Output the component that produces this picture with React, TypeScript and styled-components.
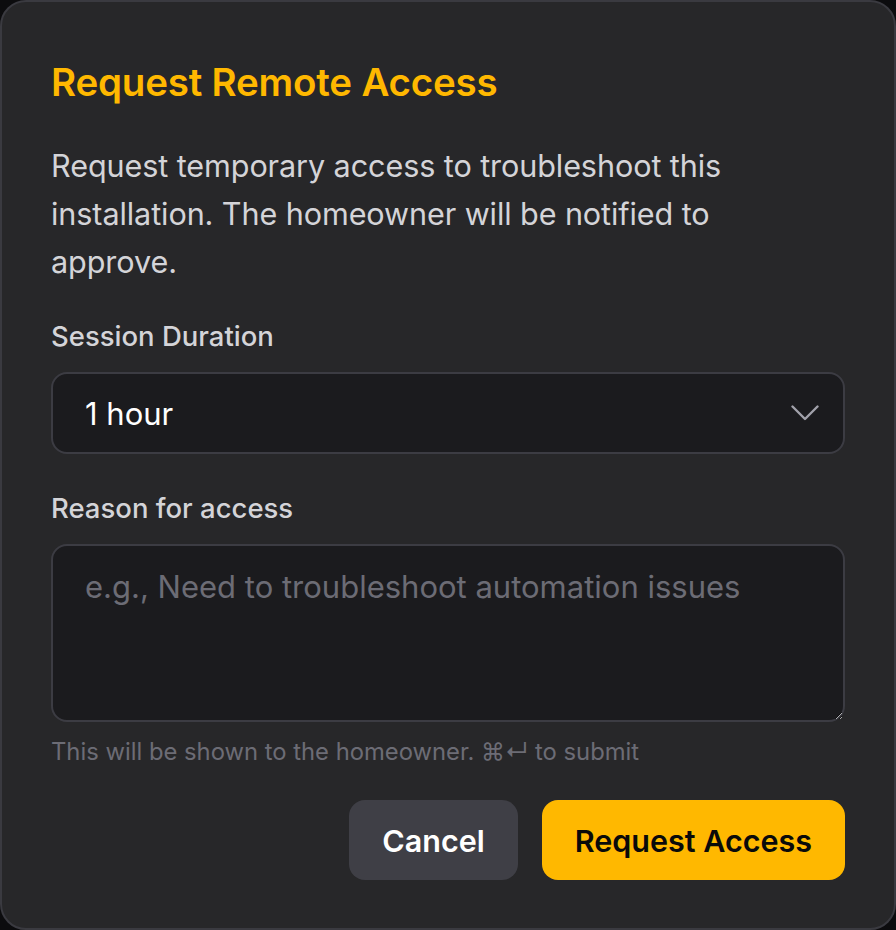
import styled, { createGlobalStyle } from 'styled-components'

const GlobalStyle = createGlobalStyle`
  html, body {
    margin: 0;
    padding: 0;
    background: #0c0c0e;
  }
  * {
    box-sizing: border-box;
  }
`

const durations = ['30 minutes', '1 hour', '2 hours', '4 hours', '8 hours']

const App = () => {
  return (
    <>
      <GlobalStyle />
      <StyledDialog>
        <StyledTitle>Request Remote Access</StyledTitle>
        <StyledDescription>
          Request temporary access to troubleshoot this installation. The
          homeowner will be notified to approve.
        </StyledDescription>

        <StyledField $gap={32}>
          <StyledLabel>Session Duration</StyledLabel>
          <StyledSelectWrap>
            <StyledSelect defaultValue="1 hour">
              {durations.map((d) => (
                <option key={d} value={d}>
                  {d}
                </option>
              ))}
            </StyledSelect>
            <StyledChevron viewBox="0 0 28 16" width="28" height="16">
              <path d="M1.5 1.5 L14 14 L26.5 1.5" />
            </StyledChevron>
          </StyledSelectWrap>
        </StyledField>

        <StyledField $gap={36}>
          <StyledLabel>Reason for access</StyledLabel>
          <StyledTextarea placeholder="e.g., Need to troubleshoot automation issues" />
          <StyledHint>This will be shown to the homeowner. ⌘↵ to submit</StyledHint>
        </StyledField>

        <StyledActions>
          <StyledButton $variant="secondary">Cancel</StyledButton>
          <StyledButton $variant="primary">Request Access</StyledButton>
        </StyledActions>
      </StyledDialog>
    </>
  )
}

export default App

const StyledDialog = styled.div`
  width: 896px;
  height: 930px;
  display: flex;
  flex-direction: column;
  padding: 58px 49px 48px 49px;
  background: #272729;
  border: 2px solid #3a3a40;
  border-radius: 26px;
  font-family: Inter, 'Noto Sans', sans-serif;
`

const StyledTitle = styled.h2`
  margin: 0;
  font-size: 38.5px;
  line-height: 44px;
  font-weight: 600;
  color: #ffb800;
  letter-spacing: -0.2px;
`

const StyledDescription = styled.p`
  margin: 38px 0 0;
  max-width: 740px;
  font-size: 30.6px;
  line-height: 48px;
  color: #d4d4d8;
  letter-spacing: -0.1px;
`

const StyledField = styled.div<{ $gap: number }>`
  display: flex;
  flex-direction: column;
  margin-top: ${({ $gap }) => $gap}px;
`

const StyledLabel = styled.label`
  font-size: 27.5px;
  line-height: 36px;
  font-weight: 500;
  color: #d4d4d8;
  margin-bottom: 18px;
`

const StyledSelectWrap = styled.div`
  position: relative;
`

const StyledSelect = styled.select`
  appearance: none;
  width: 100%;
  height: 82px;
  padding: 0 80px 0 32px;
  background: #1b1b1e;
  border: 2px solid #3c3c43;
  border-radius: 16px;
  color: #ffffff;
  font-family: Inter, 'Noto Sans', sans-serif;
  font-size: 31px;
  outline: none;
`

const StyledChevron = styled.svg`
  position: absolute;
  right: 26px;
  top: 33px;
  fill: none;
  stroke: #a1a1aa;
  stroke-width: 2.4;
  stroke-linecap: round;
  stroke-linejoin: round;
  pointer-events: none;
`

const StyledTextarea = styled.textarea`
  width: 100%;
  height: 178px;
  padding: 20px 32px;
  background: #1b1b1e;
  border: 2px solid #3c3c43;
  border-radius: 16px;
  color: #ffffff;
  font-family: Inter, 'Noto Sans', sans-serif;
  font-size: 31px;
  line-height: 42px;
  resize: vertical;
  outline: none;
  color-scheme: dark;

  &::placeholder {
    color: #6c6c75;
  }
`

const StyledHint = styled.p`
  margin: 14px 0 0;
  font-size: 23.8px;
  line-height: 32px;
  color: #6c6c75;
`

const StyledActions = styled.div`
  display: flex;
  justify-content: flex-end;
  gap: 24px;
  margin-top: 32px;
`

const StyledButton = styled.button<{ $variant: 'primary' | 'secondary' }>`
  height: 80px;
  padding: 0 33px;
  border: none;
  border-radius: 16px;
  font-family: Inter, 'Noto Sans', sans-serif;
  font-size: 30.5px;
  font-weight: 600;
  cursor: pointer;
  background: ${({ $variant }) => ($variant === 'primary' ? '#ffb800' : '#3f3f46')};
  color: ${({ $variant }) => ($variant === 'primary' ? '#0a0a0a' : '#ffffff')};
`
